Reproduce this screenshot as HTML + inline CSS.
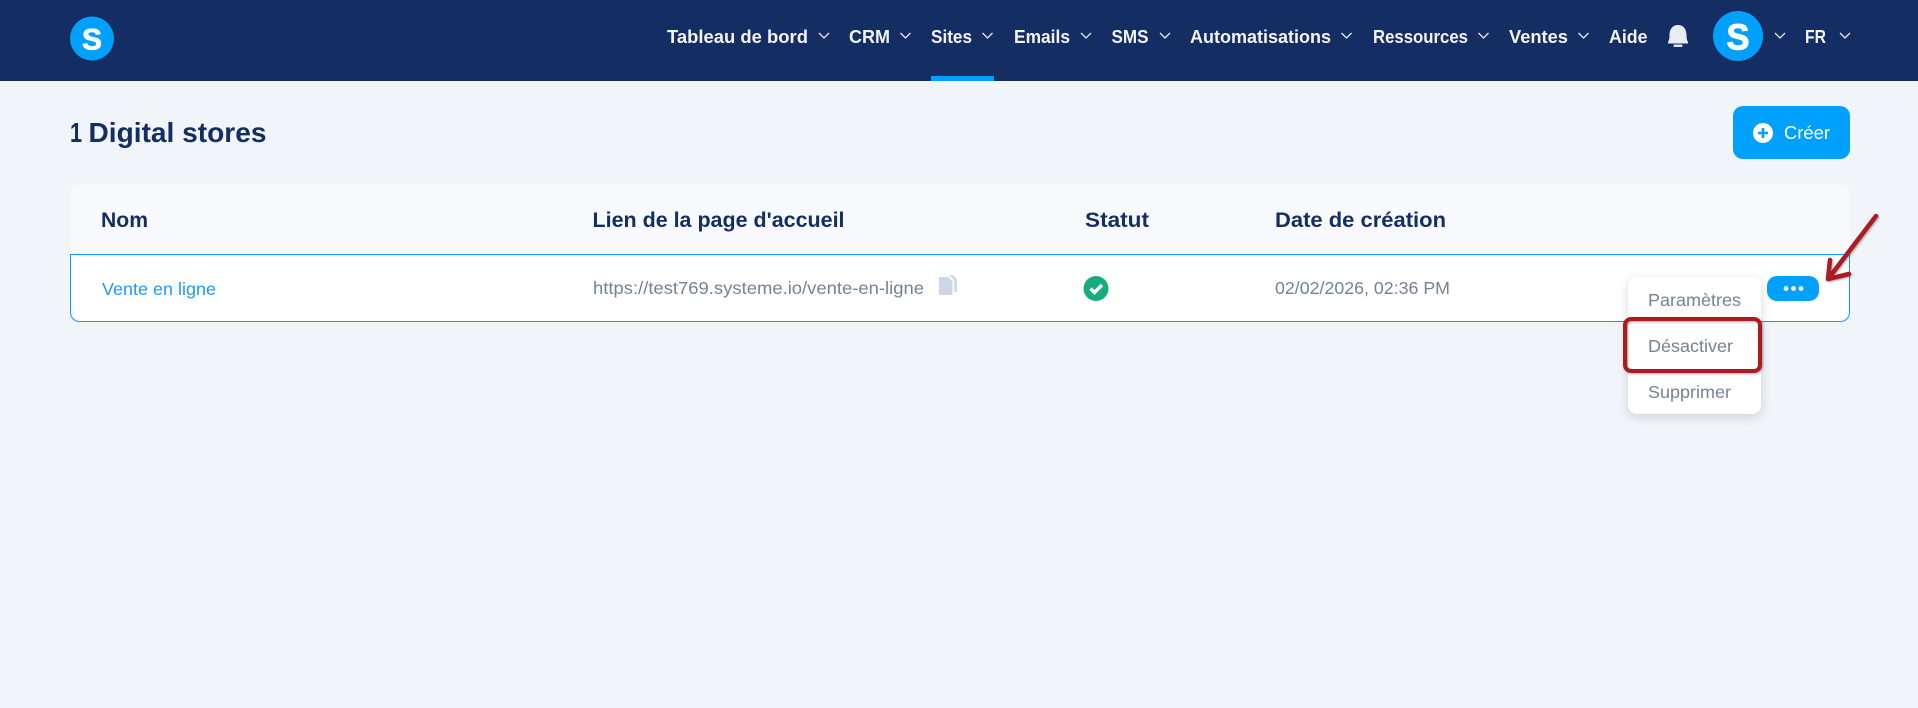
<!DOCTYPE html>
<html lang="fr">
<head>
<meta charset="utf-8">
<title>Digital stores</title>
<style>
html,body{margin:0;padding:0;width:1918px;height:708px;overflow:hidden;background:#f1f4f9;}
svg{display:block;font-family:"Liberation Sans",sans-serif;}
.nav{font-size:18px;font-weight:700;fill:#f2f4f8;}
.th{font-size:21px;font-weight:700;fill:#142d63;}
.td{font-size:17.5px;fill:#748297;}
.mi{font-size:17.5px;fill:#748297;}
.ch{fill:none;stroke:#e8ebf2;stroke-width:1.3;}
</style>
</head>
<body>
<svg width="1918" height="708" viewBox="0 0 1918 708" xmlns="http://www.w3.org/2000/svg">
<defs>
<filter id="sh" x="-30%" y="-30%" width="160%" height="160%"><feDropShadow dx="0" dy="3" stdDeviation="5" flood-color="#1a2a50" flood-opacity=".16"/></filter>
<filter id="rs" x="-20%" y="-20%" width="140%" height="140%"><feDropShadow dx="1" dy="1" stdDeviation="1" flood-color="#000" flood-opacity=".35"/></filter>
</defs>
<rect width="1918" height="708" fill="#f1f4f9"/>
<rect width="1918" height="81" fill="#142d63"/>

<!-- logo -->
<circle cx="92" cy="38.500" r="22" fill="#00a0ff"/>
<text x="82" y="49.500" font-size="30" font-weight="700" fill="#fff" stroke="#fff" stroke-width=".8" textLength="20" lengthAdjust="spacingAndGlyphs">S</text>

<!-- nav -->
<text class="nav" x="667" y="43" textLength="141" lengthAdjust="spacingAndGlyphs">Tableau de bord</text>
<path class="ch" d="M819 33l5 5 5-5"/>
<text class="nav" x="849" y="43" textLength="41" lengthAdjust="spacingAndGlyphs">CRM</text>
<path class="ch" d="M900.500 33l5 5 5-5"/>
<text class="nav" x="931" y="43" textLength="41" lengthAdjust="spacingAndGlyphs">Sites</text>
<path class="ch" d="M982.500 33l5 5 5-5"/>
<text class="nav" x="1014" y="43" textLength="56" lengthAdjust="spacingAndGlyphs">Emails</text>
<path class="ch" d="M1081 33l5 5 5-5"/>
<text class="nav" x="1111.500" y="43" textLength="37" lengthAdjust="spacingAndGlyphs">SMS</text>
<path class="ch" d="M1160 33l5 5 5-5"/>
<text class="nav" x="1190" y="43" textLength="141" lengthAdjust="spacingAndGlyphs">Automatisations</text>
<path class="ch" d="M1341.500 33l5 5 5-5"/>
<text class="nav" x="1373" y="43" textLength="95" lengthAdjust="spacingAndGlyphs">Ressources</text>
<path class="ch" d="M1478.500 33l5 5 5-5"/>
<text class="nav" x="1509" y="43" textLength="59" lengthAdjust="spacingAndGlyphs">Ventes</text>
<path class="ch" d="M1578.500 33l5 5 5-5"/>
<text class="nav" x="1609" y="43" textLength="38.500" lengthAdjust="spacingAndGlyphs">Aide</text>
<rect x="931" y="76" width="63" height="5" fill="#00a0ff"/>

<!-- bell -->
<path d="M1678 25c-6 0-8.500 5-8.500 10 0 3.500-.5 5.500-1.500 7v1.500h20V42c-1-1.500-1.500-3.500-1.500-7 0-5-2.500-10-8.500-10z" fill="#e9ecf0"/>
<rect x="1673.500" y="44.500" width="9" height="2.500" rx="1" fill="#dfe3e8"/>

<!-- avatar -->
<circle cx="1738" cy="36" r="25" fill="#00a0ff"/>
<text x="1726.500" y="49.500" font-size="36" font-weight="700" fill="#fff" stroke="#fff" stroke-width="1" textLength="23" lengthAdjust="spacingAndGlyphs">S</text>
<path class="ch" d="M1775 33l5 5 5-5"/>
<text class="nav" x="1805" y="43" textLength="21" lengthAdjust="spacingAndGlyphs">FR</text>
<path class="ch" d="M1840 33l5 5 5-5"/>

<!-- title -->
<text x="70" y="142" font-size="27.500" font-weight="700" fill="#142d63" textLength="12" lengthAdjust="spacingAndGlyphs">1</text>
<text x="88.500" y="142" font-size="27.500" font-weight="700" fill="#142d63" textLength="178" lengthAdjust="spacingAndGlyphs">Digital stores</text>

<!-- button -->
<rect x="1733" y="106" width="117" height="53" rx="10" fill="#00a0ff"/>
<circle cx="1763" cy="133" r="10" fill="#fff"/>
<path d="M1763 128v10M1758 133h10" stroke="#00a0ff" stroke-width="2.600" fill="none"/>
<text x="1784" y="139" font-size="18" fill="#fff" textLength="46" lengthAdjust="spacingAndGlyphs">Créer</text>

<!-- table -->
<path d="M70 254v-60a10 10 0 0 1 10-10h1760a10 10 0 0 1 10 10v60z" fill="#f8f9fc"/>
<path d="M70.500 254.500h1779v58a9 9 0 0 1-9 9h-1761a9 9 0 0 1-9-9z" fill="#fff" stroke="#00a0ff" stroke-width="1"/>
<text class="th" x="101" y="227" textLength="47" lengthAdjust="spacingAndGlyphs">Nom</text>
<text class="th" x="592.500" y="227" textLength="252" lengthAdjust="spacingAndGlyphs">Lien de la page d'accueil</text>
<text class="th" x="1085" y="227" textLength="64" lengthAdjust="spacingAndGlyphs">Statut</text>
<text class="th" x="1275" y="227" textLength="171" lengthAdjust="spacingAndGlyphs">Date de création</text>

<text x="102" y="295" font-size="17.500" fill="#1c9bf5" textLength="114" lengthAdjust="spacingAndGlyphs">Vente en ligne</text>
<text class="td" x="593" y="294" textLength="331" lengthAdjust="spacingAndGlyphs">https://test769.systeme.io/vente-en-ligne</text>
<path d="M939 277h9l4.500 4.500V295H939z" fill="#cdd6e4"/>
<path d="M945 275h8l4 4v13h-3v-11.500l-5-5.500z" fill="#d3dbe7"/>
<circle cx="1096" cy="288.500" r="12.500" fill="#16ab80"/>
<path d="M1090.500 288.500l4 4 7.500-7.500" fill="none" stroke="#fff" stroke-width="3.400"/>
<text class="td" x="1275" y="294" textLength="175" lengthAdjust="spacingAndGlyphs">02/02/2026, 02:36 PM</text>

<!-- more button -->
<rect x="1767" y="276" width="52" height="25" rx="10" fill="#00a0ff"/>
<circle cx="1786" cy="288.500" r="2.400" fill="#fff"/>
<circle cx="1793.500" cy="288.500" r="2.400" fill="#fff"/>
<circle cx="1801" cy="288.500" r="2.400" fill="#fff"/>

<!-- menu -->
<rect x="1628" y="277" width="133" height="137" rx="9" fill="#fff" filter="url(#sh)"/>
<text class="mi" x="1648" y="306" textLength="93" lengthAdjust="spacingAndGlyphs">Paramètres</text>
<text class="mi" x="1648" y="352" textLength="85" lengthAdjust="spacingAndGlyphs">Désactiver</text>
<text class="mi" x="1648" y="398" textLength="83" lengthAdjust="spacingAndGlyphs">Supprimer</text>

<!-- annotations -->
<rect x="1625" y="319" width="135" height="52" rx="6" fill="none" stroke="#a91e22" stroke-width="4" filter="url(#rs)"/>
<path d="M1876 216L1828 279M1830 260L1828 279L1849 274" fill="none" stroke="#a91e22" stroke-width="4.500" stroke-linecap="round" stroke-linejoin="round" filter="url(#rs)"/>
</svg>
</body>
</html>
